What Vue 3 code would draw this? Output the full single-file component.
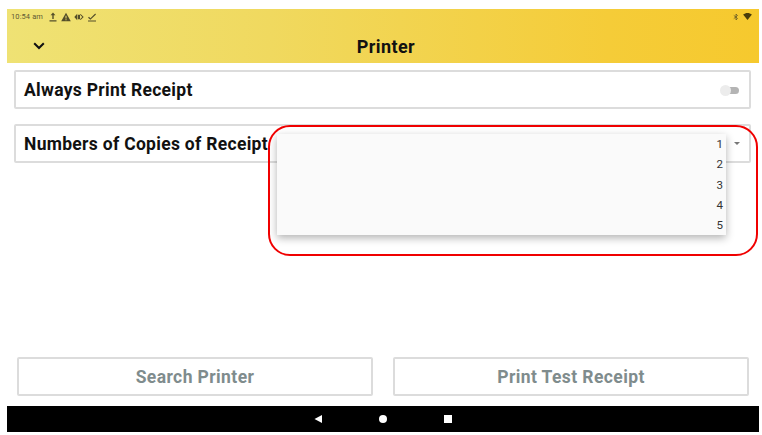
<template>
  <div class="screen">
    <header class="app-header">
      <div class="status-bar">
        <span class="clock">10:54 am</span>
        <svg class="status-icon" viewBox="0 0 10 10"><path d="M5 0.5 2.6 3.2H4.3V7H5.7V3.2H7.4ZM1.5 8.2H8.5V9.4H1.5Z" /></svg>
        <svg class="status-icon" viewBox="0 0 10 10"><path fill-rule="evenodd" d="M5 .8 9.8 9.2H.2ZM4.5 3.8V6.6H5.5V3.8ZM4.5 7.2V8.2H5.5V7.2Z" /></svg>
        <svg class="status-icon" viewBox="0 0 10 10"><path d="M3.2 1.8.3 5 3.2 8.2ZM3.8 2.8H6V7.2H3.8ZM6.6 2 9.7 5 6.6 8 6 7.3 8.3 5 6 2.7Z" /></svg>
        <svg class="status-icon" viewBox="0 0 10 10"><path d="M1 5.8 2 4.8 3.4 6.2 8.2 1.6 9 2.4 3.4 7.8ZM1 8.4H9V9.5H1Z" /></svg>
        <span class="status-spacer"></span>
        <svg class="status-bt" viewBox="0 0 8 10"><path fill="none" stroke="#5f5426" stroke-width="1" d="M1 2.8 6 7 4 8.9V1.1L6 3 1 7.2" /></svg>
        <svg class="status-wifi" viewBox="0 0 10 8"><path d="M0 1.8C2.8-.6 7.2-.6 10 1.8L5 8Z" /></svg>
      </div>
      <div class="title-bar">
        <svg class="back-icon" viewBox="0 0 12 8"><path d="M1.2 1.2 6 6 10.8 1.2" /></svg>
        <h1>Printer</h1>
      </div>
    </header>

    <main class="content">
      <div class="setting-row">
        <span class="setting-label">Always Print Receipt</span>
        <span class="toggle"><span class="toggle-track"></span><span class="toggle-thumb"></span></span>
      </div>
      <div class="setting-row">
        <span class="setting-label">Numbers of Copies of Receipt</span>
        <span class="caret"></span>
      </div>

      <ul class="dropdown">
        <li v-for="n in copies" :key="n">{{ n }}</li>
      </ul>
      <div class="highlight"></div>

      <div class="actions">
        <button class="action-btn">Search Printer</button>
        <button class="action-btn">Print Test Receipt</button>
      </div>
    </main>

    <nav class="nav-bar">
      <svg class="nav-icon" viewBox="0 0 10 10"><path d="M9 1V9L1.5 5Z" /></svg>
      <svg class="nav-icon" viewBox="0 0 10 10"><circle cx="5" cy="5" r="4" /></svg>
      <svg class="nav-icon" viewBox="0 0 10 10"><rect x="1" y="1" width="8" height="8" /></svg>
    </nav>
  </div>
</template>

<script setup>
const copies = [1, 2, 3, 4, 5]
</script>

<style>
html,
body {
  background: #fff;
}
</style>

<style scoped>
.screen {
  width: 752px;
  height: 423px;
  margin: 9px 0 0 7px;
  display: flex;
  flex-direction: column;
  font-family: Roboto, "Liberation Sans", sans-serif;
  background: #fff;
}

.app-header {
  height: 54px;
  flex: none;
  background: linear-gradient(90deg, #efe274 0%, #f0d95f 35%, #f5cc38 80%, #f6c92e 100%);
}

.status-bar {
  height: 15px;
  display: flex;
  align-items: center;
  padding: 0 7px 0 4px;
  color: #5f5a35;
}

.clock {
  font-size: 7.5px;
  margin-right: 5px;
  letter-spacing: 0.1px;
}

.status-icon {
  width: 10px;
  height: 10px;
  margin-right: 3px;
  fill: #544e2a;
}

.status-spacer {
  flex: 1;
}

.status-bt {
  width: 6px;
  height: 8px;
  margin-right: 4px;
}

.status-wifi {
  width: 9px;
  height: 7px;
  fill: #4a3c0a;
}

.title-bar {
  height: 39px;
  box-sizing: border-box;
  padding: 5px 0 0 6px;
  position: relative;
  display: flex;
  align-items: center;
  justify-content: center;
}

.title-bar h1 {
  margin: 0;
  font-size: 18px;
  font-weight: 700;
  color: #111;
  letter-spacing: 0.4px;
}

.back-icon {
  position: absolute;
  left: 26px;
  top: 18px;
  width: 12px;
  height: 8px;
  fill: none;
  stroke: #111;
  stroke-width: 2;
}

.content {
  flex: 1;
  position: relative;
  padding: 7px 8px 10px 7px;
  display: flex;
  flex-direction: column;
}

.setting-row {
  height: 39px;
  box-sizing: border-box;
  margin-bottom: 15px;
  display: flex;
  align-items: center;
  padding: 0 10px 0 8px;
  border: 2px solid #dcdcdc;
  border-radius: 2px;
}

.setting-label {
  flex: 1;
  font-size: 17.5px;
  font-weight: 700;
  color: #111;
  letter-spacing: 0.3px;
}

.toggle {
  position: relative;
  width: 19px;
  height: 12px;
}

.toggle-track {
  position: absolute;
  left: 3px;
  top: 3px;
  width: 16px;
  height: 7px;
  border-radius: 4px;
  background: #b4b4b4;
}

.toggle-thumb {
  position: absolute;
  left: 0;
  top: 1px;
  width: 11px;
  height: 11px;
  border-radius: 50%;
  background: #ececec;
}

.caret {
  width: 0;
  height: 0;
  margin-right: -1px;
  border-left: 3px solid transparent;
  border-right: 3px solid transparent;
  border-top: 3px solid #777;
}

.dropdown {
  position: absolute;
  left: 270px;
  top: 71px;
  width: 449px;
  height: 101px;
  box-sizing: border-box;
  margin: 0;
  padding: 0 3px 0 0;
  list-style: none;
  background: #fafafa;
  box-shadow: 0 3px 8px rgba(0, 0, 0, 0.3);
  display: flex;
  flex-direction: column;
  align-items: flex-end;
  font-size: 11.5px;
  color: #333;
}

.dropdown li {
  height: 20.3px;
  line-height: 20.3px;
}

.highlight {
  position: absolute;
  left: 261px;
  top: 62px;
  width: 490px;
  height: 131px;
  box-sizing: border-box;
  border: 2px solid #f00000;
  border-radius: 22px;
}

.actions {
  margin-top: auto;
  display: flex;
  gap: 20px;
  padding-left: 3px;
  padding-right: 2px;
}

.action-btn {
  flex: 1;
  height: 39px;
  padding: 0;
  background: #fff;
  border: 2px solid #dcdcdc;
  border-radius: 2px;
  font-size: 17.5px;
  font-weight: 700;
  font-family: Roboto, "Liberation Sans", sans-serif;
  letter-spacing: 0.4px;
  color: #7f8c8d;
}

.nav-bar {
  height: 26px;
  flex: none;
  background: #000;
  display: flex;
  align-items: center;
  justify-content: center;
  gap: 55px;
}

.nav-icon {
  width: 10px;
  height: 10px;
  fill: #fff;
}
</style>
